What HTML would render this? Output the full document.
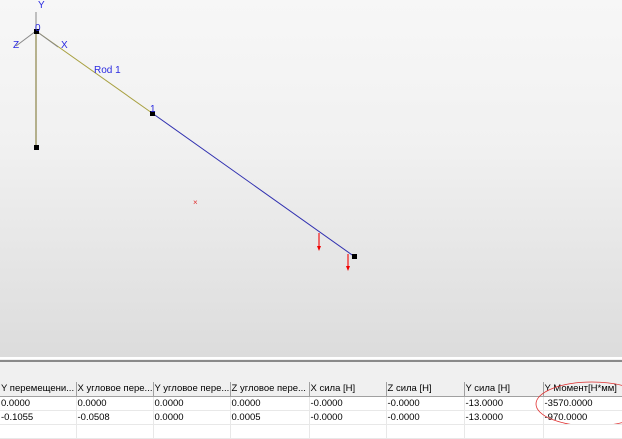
<!DOCTYPE html>
<html><head><meta charset="utf-8"><style>
body{margin:0;width:622px;height:424px;overflow:hidden;font-family:"Liberation Sans",sans-serif;font-size:9.5px;background:#f0f0f0;position:relative}
#cv{position:absolute;left:0;top:0;width:622px;height:357px;background:linear-gradient(#f7f7f7,#f1f1f1 40%,#dcdcdc)}
.l{position:absolute;left:0;width:622px}
table{position:absolute;left:0;top:382px;border-collapse:collapse;table-layout:fixed;width:640px}
td{white-space:nowrap;overflow:hidden;padding:0 0 0 1px;height:13px;line-height:13px;color:#000}
tr.h td{background:#f0f0f0;border-right:1px solid #a0a0a0;border-bottom:1px solid #a0a0a0;height:14px;line-height:14px}
tr.r td{background:#fff;border-right:1px solid #e8e8e8;border-bottom:1px solid #e8e8e8}
</style></head><body>
<div id="cv"></div>
<div class="l" style="top:357px;height:2px;background:#fff"></div>
<div class="l" style="top:360px;height:2px;background:#8a8a8a"></div>
<div class="l" style="top:362px;height:20px;background:#f0f0f0"></div>
<svg width="622" height="424" style="position:absolute;left:0;top:0" font-family="Liberation Sans" font-size="10" fill="#2a2ae0">
<line x1="36" y1="31" x2="36" y2="147" stroke="#8c8448" stroke-width="1.2"/>
<line x1="36" y1="31" x2="152" y2="113" stroke="#a8a040" stroke-width="1"/>
<line x1="152" y1="113" x2="355" y2="257" stroke="#3030b0" stroke-width="1"/>
<line x1="36" y1="31" x2="36" y2="12" stroke="#888"/>
<line x1="36" y1="31" x2="58" y2="47" stroke="#888"/>
<line x1="36" y1="31" x2="16" y2="46" stroke="#888"/>
<rect x="34" y="29" width="5" height="5" fill="#000"/>
<rect x="34" y="145" width="5" height="5" fill="#000"/>
<rect x="150" y="111" width="5" height="5" fill="#000"/>
<rect x="352" y="254" width="5" height="5" fill="#000"/>
<text x="38" y="8">Y</text><text x="35" y="31">0</text><text x="13" y="48">Z</text><text x="61" y="48">X</text>
<text x="94" y="73">Rod 1</text><text x="150" y="112">1</text>
<line x1="319" y1="233" x2="319" y2="248" stroke="#f04040" stroke-width="1.5"/><path d="M317 246 L319 251 L321 246Z" fill="#e00"/>
<line x1="348" y1="254" x2="348" y2="268" stroke="#f04040" stroke-width="1.5"/><path d="M346 266 L348 271 L350 266Z" fill="#e00"/>
<text x="193" y="205" fill="#e03030" font-size="8">×</text>
</svg>
<table>
<colgroup><col style="width:76px"><col style="width:77px"><col style="width:77px"><col style="width:79px"><col style="width:77px"><col style="width:78px"><col style="width:79px"><col style="width:97px"></colgroup>
<tr class="h"><td>Y перемещени...</td><td>X угловое пере...</td><td>Y угловое пере...</td><td>Z угловое пере...</td><td>X сила [H]</td><td>Z сила [H]</td><td>Y сила [H]</td><td>Y Момент[H*мм]</td></tr>
<tr class="r"><td>0.0000</td><td>0.0000</td><td>0.0000</td><td>0.0000</td><td>-0.0000</td><td>-0.0000</td><td>-13.0000</td><td>-3570.0000</td></tr>
<tr class="r"><td>-0.1055</td><td>-0.0508</td><td>0.0000</td><td>0.0005</td><td>-0.0000</td><td>-0.0000</td><td>-13.0000</td><td>-970.0000</td></tr>
<tr class="r"><td></td><td></td><td></td><td></td><td></td><td></td><td></td><td></td></tr>
</table>
<svg width="622" height="424" style="position:absolute;left:0;top:0"><ellipse cx="592" cy="404" rx="56" ry="22" fill="none" stroke="#e03030" stroke-width="0.8"/></svg>
</body></html>
